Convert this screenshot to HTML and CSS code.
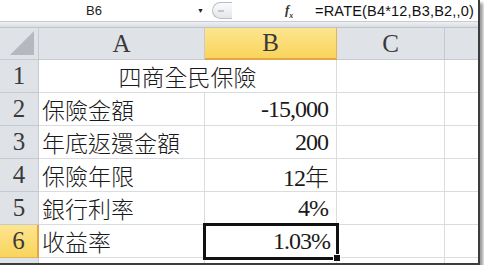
FILE: index.html
```html
<!DOCTYPE html>
<html lang="zh-Hant">
<head>
    <meta charset="UTF-8">
    <title>收益率</title>
    <link rel="stylesheet" href="styles.css">
</head>
<body>
    <div class="frame">
        <div class="formula-bar">
            <div class="name-box">
                <span class="cell-name">B6</span>
                <span class="drop">&#9660;</span>
            </div>
            <div class="fx-area">
                <span class="pill"><span class="dash"></span></span>
                <span class="fx">f<sub>x</sub></span>
            </div>
            <div class="formula">=RATE(B4*12,B3,B2,,0)</div>
        </div>
        <div class="band"></div>
        <div class="sheet">
            <div class="corner"><span class="tri"></span></div>
            <div class="col-head">A</div>
            <div class="col-head selected">B</div>
            <div class="col-head">C</div>
            <div class="col-head last"></div>

            <div class="row-head">1</div>
            <div class="cell title">四商全民保險</div>
            <div class="cell"></div>
            <div class="cell end"></div>

            <div class="row-head">2</div>
            <div class="cell">保險金額</div>
            <div class="cell num">-15,000</div>
            <div class="cell"></div>
            <div class="cell end"></div>

            <div class="row-head">3</div>
            <div class="cell">年底返還金額</div>
            <div class="cell num">200</div>
            <div class="cell"></div>
            <div class="cell end"></div>

            <div class="row-head">4</div>
            <div class="cell">保險年限</div>
            <div class="cell num">12年</div>
            <div class="cell"></div>
            <div class="cell end"></div>

            <div class="row-head">5</div>
            <div class="cell">銀行利率</div>
            <div class="cell num">4%</div>
            <div class="cell"></div>
            <div class="cell end"></div>

            <div class="row-head selected">6</div>
            <div class="cell">收益率</div>
            <div class="cell num active">1.03%<span class="handle"></span></div>
            <div class="cell"></div>
            <div class="cell end"></div>

            <div class="row-head"></div>
            <div class="cell"></div>
            <div class="cell"></div>
            <div class="cell"></div>
            <div class="cell end"></div>
        </div>
    </div>
</body>
</html>
```

FILE: styles.css
```css
body {
    margin: 0;
    background-color: #fff;
    font-family: "Liberation Serif", "Noto Sans CJK TC", serif;
}
.frame {
    width: 478px;
    height: 263px;
    overflow: hidden;
    border-right: 2px solid #3c3c3c;
    border-bottom: 2px solid #3c3c3c;
    box-shadow: 3px 3px 3px #9a9a9a;
    background-color: #fff;
}
.formula-bar {
    display: flex;
    height: 21px;
    align-items: center;
    border-bottom: 1px solid #c8ccd2;
    background-color: #fff;
}
.name-box {
    width: 205px;
    display: flex;
    align-items: center;
    font-family: "Liberation Sans", sans-serif;
    font-size: 13px;
    color: #222;
}
.cell-name {
    margin-left: 86px;
}
.drop {
    margin-left: 95px;
    font-size: 7px;
    color: #222;
}
.fx-area {
    width: 105px;
    height: 21px;
    display: flex;
    align-items: center;
    background-color: #fff;
}
.pill {
    width: 20px;
    height: 17px;
    margin-left: 7px;
    border: 1px solid #b9bec5;
    border-radius: 9px 0 0 9px;
    border-right: none;
    background: linear-gradient(#fafbfc, #e3e6ea);
    display: flex;
    align-items: center;
    padding-left: 5px;
    box-sizing: border-box;
}
.dash {
    width: 6px;
    height: 2px;
    background-color: #c3c7cc;
}
.fx {
    margin-left: 53px;
    font-family: "Liberation Serif", serif;
    font-style: italic;
    font-weight: bold;
    font-size: 13px;
    color: #333;
}
.fx sub {
    font-size: 8px;
}
.formula {
    font-family: "Liberation Sans", sans-serif;
    font-size: 14.5px;
    letter-spacing: 0.2px;
    color: #111;
    margin-left: 5px;
}
.band {
    height: 5px;
    background: linear-gradient(#eef0f3, #d9dde3);
    border-bottom: 1px solid #c0c5cc;
}
.sheet {
    display: grid;
    grid-template-columns: 39px 166px 132px 108px 1fr;
    grid-template-rows: 32px repeat(6, 33px) 33px;
}
.corner {
    background-color: #dfe3e8;
    border-right: 1px solid #c5cad1;
    border-bottom: 1px solid #c5cad1;
    position: relative;
}
.tri {
    position: absolute;
    right: 4px;
    bottom: 4px;
    width: 0;
    height: 0;
    border-left: 24px solid transparent;
    border-bottom: 24px solid #b5b9bf;
}
.col-head {
    background-color: #dfe3e8;
    border-right: 1px solid #c5cad1;
    border-bottom: 1px solid #c5cad1;
    display: flex;
    align-items: center;
    justify-content: center;
    font-size: 25px;
    color: #3a3a3a;
}
.col-head.last {
    border-right: none;
}
.col-head.selected {
    background: linear-gradient(#fde58f, #f9d45c);
    border-bottom: 2px solid #e4a644;
    border-right-color: #e1b65a;
}
.row-head {
    background-color: #dfe3e8;
    border-right: 1px solid #c5cad1;
    border-bottom: 1px solid #c5cad1;
    display: flex;
    align-items: center;
    justify-content: center;
    font-size: 25px;
    color: #3a3a3a;
}
.row-head.selected {
    background: linear-gradient(#fde58f, #f9d45c);
    border-right: 2px solid #e4a644;
    border-bottom-color: #e1b65a;
}
.cell {
    border-right: 1px solid #dadcdd;
    border-bottom: 1px solid #dadcdd;
    display: flex;
    align-items: center;
    padding-left: 3px;
    font-size: 23px;
    font-weight: 300;
    color: #1a1a1a;
    white-space: nowrap;
}
.cell.end {
    border-right: none;
}
.cell.title {
    grid-column: span 2;
    justify-content: center;
    padding-left: 0;
}
.cell.num {
    justify-content: flex-end;
    padding-left: 0;
    padding-right: 8px;
    font-size: 24px;
    letter-spacing: -1px;
}
.cell.active {
    position: relative;
    border: 3px solid #111;
    margin: -2px;
    padding-right: 6px;
}
.handle {
    position: absolute;
    right: -5px;
    bottom: -5px;
    width: 6px;
    height: 6px;
    background-color: #111;
    border: 1px solid #fff;
}
```
